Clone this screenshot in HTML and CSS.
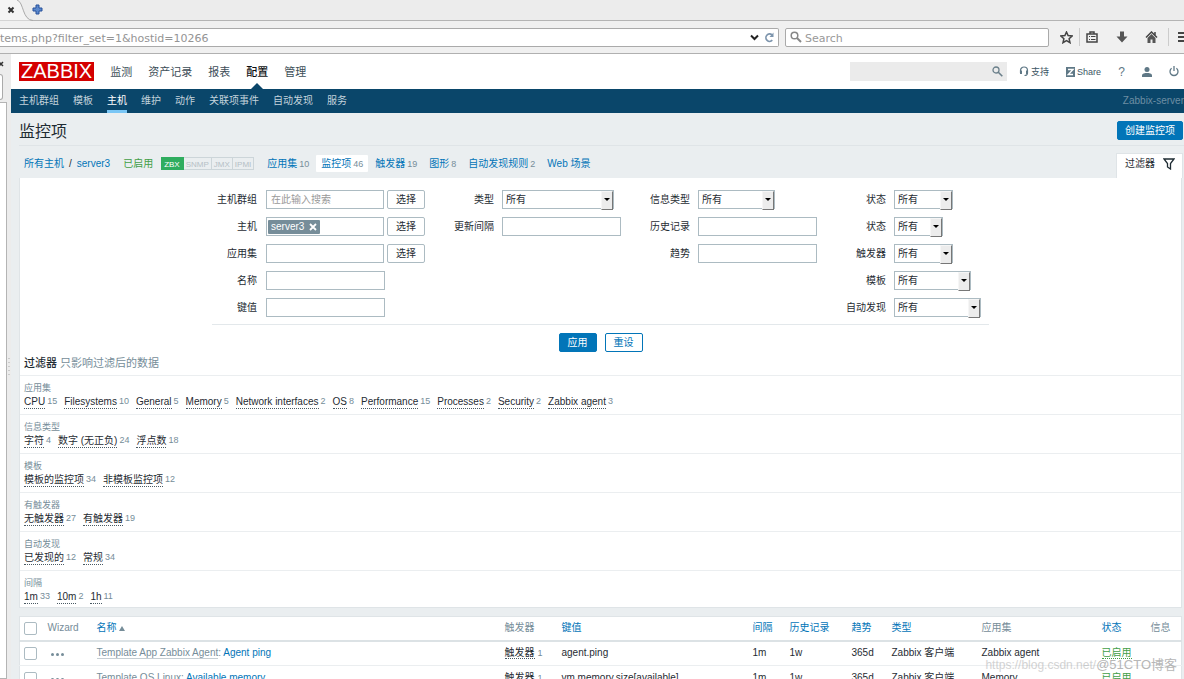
FILE: index.html
```html
<!DOCTYPE html>
<html lang="zh-CN">
<head>
<meta charset="utf-8">
<title>监控项</title>
<link rel="stylesheet" href="styles.css">
</head>
<body>
<div class="tabstrip">
  <svg class="tab-shape" viewBox="0 0 34 21" aria-hidden="true"><path d="M0 0H17C24 2 22 20 32 20.500H0Z" fill="#f4f4f4"/><path d="M17 0C24 2 22 20 33 20.500" fill="none" stroke="#aaa"/><path d="M8.500 7.500l5 5M13.500 7.500l-5 5" stroke="#333" stroke-width="2"/></svg>
  <button class="plain" aria-label="New tab"><svg width="12" height="12" viewBox="0 0 12 12"><path d="M4 1h3v3h3v3H7v3H4V7H1V4h3z" fill="#5b88cc" stroke="#27509b"/></svg></button>
</div>
<div class="toolbar">
  <div class="urlbar">
    <input class="url" aria-label="Address" value="tems.php?filter_set=1&amp;hostid=10266">
    <svg width="9" height="7" viewBox="0 0 9 7"><path d="M1 1.500l3.500 3.500L8 1.500" fill="none" stroke="#222" stroke-width="2"/></svg>
    <svg width="11" height="11" viewBox="0 0 11 11"><path d="M8.300 8.200A3.700 3.700 0 1 1 8 2.800" fill="none" stroke="#7d95ad" stroke-width="1.700"/><path d="M9.500 0.500v4.500H5.500z" fill="#7d95ad"/></svg>
  </div>
  <div class="searchbar">
    <svg width="12" height="12" viewBox="0 0 12 12"><circle cx="4.500" cy="4.500" r="3.300" fill="none" stroke="#888" stroke-width="1.500"/><path d="M7 7l4 4" stroke="#888" stroke-width="2"/></svg>
    <input placeholder="Search" aria-label="Search">
  </div>
  <div class="tools">
    <svg class="star" width="13" height="13" viewBox="0 0 13 13"><path d="M6.500 1l1.600 3.600 4 .4-3 2.700.9 4-3.500-2-3.500 2 .9-4-3-2.700 4-.4z" fill="none" stroke="#444" stroke-width="1.500"/></svg>
    <i class="sep"></i>
    <svg class="clip" width="12" height="12" viewBox="0 0 12 12"><path d="M4 3V1h4v2M1 3h10v8H1z" fill="none" stroke="#444" stroke-width="1.500"/><path d="M3 5.500h1M5 5.500h4.500M3 8.500h1M5 8.500h4.500" stroke="#444"/></svg>
    <svg class="down" width="12" height="12" viewBox="0 0 12 12"><path d="M4 0.500h4v5h3.500L6 11.500.5 5.500H4z" fill="#555"/></svg>
    <svg class="home" width="13" height="12" viewBox="0 0 13 12"><path d="M1 6.500L6.500 1 12 6.500M10 1v3" fill="none" stroke="#444" stroke-width="1.500"/><path d="M2.500 7L6.500 3l4 4v5H7.500V8.500h-2V12h-3z" fill="#555"/></svg>
    <i class="sep"></i>
    <svg class="menu" width="6" height="12" viewBox="0 0 6 12"><path d="M0 2h6M0 6h6M0 10h6" stroke="#444" stroke-width="2"/></svg>
  </div>
</div>
<div class="workspace">
  <aside class="sidebar">
    <svg width="5" height="20" viewBox="0 0 5 20"><path d="M-1 8l4 4M3 8l-4 4" stroke="#333" stroke-width="1.500"/></svg>
    <div class="side-field"></div>
    <div class="side-list"></div>
    <svg class="grip" width="2" height="20" viewBox="0 0 2 20"><path d="M1 0v20" stroke="#aaa" stroke-dasharray="1 3"/></svg>
  </aside>
  <div class="page">
    <header class="top">
      <a class="logo" href="#">ZABBIX</a>
      <nav class="mainnav"><a href="#">监测</a><a href="#">资产记录</a><a href="#">报表</a><a href="#" class="on">配置</a><a href="#">管理</a></nav>
      <div class="topsearch"><input aria-label="搜索"><svg width="11" height="11" viewBox="0 0 11 11"><circle cx="4" cy="4" r="3" fill="none" stroke="#6a7f8a" stroke-width="1.300"/><path d="M6.300 6.300l4 4" stroke="#6a7f8a" stroke-width="1.600"/></svg></div>
      <div class="toplinks">
        <a href="#"><svg width="10" height="11" viewBox="0 0 10 11"><path d="M1.500 7V4.500a3.500 3.500 0 0 1 7 0V7c0 2-1 2.500-3 2.500" fill="none" stroke="#5f7886" stroke-width="1.200"/><path d="M1 4.500h2v3.500H1zM7 4.500h2v3.500H7z" fill="#5f7886"/></svg><span>支持</span></a>
        <a href="#"><svg width="9" height="10" viewBox="0 0 9 10"><path d="M0 0h9v10H0z" fill="#5f7886"/><path d="M2 2.500h5L2.300 7.500H7" fill="none" stroke="#fff" stroke-width="1.400"/></svg><span>Share</span></a>
        <a href="#" class="help">?</a>
        <a href="#" aria-label="用户"><svg width="10" height="10" viewBox="0 0 10 10"><circle cx="5" cy="2.600" r="2.500" fill="#5f7886"/><path d="M0 10V8.500C0 6.500 3 6 5 6s5 .5 5 2.500V10z" fill="#5f7886"/></svg></a>
        <a href="#" aria-label="退出"><svg width="10" height="11" viewBox="0 0 10 11"><path d="M2.600 2.300a4 4 0 1 0 4.800 0M5 0v5" fill="none" stroke="#5f7886" stroke-width="1.300"/></svg></a>
      </div>
    </header>
    <nav class="subnav"><a href="#">主机群组</a><a href="#">模板</a><a href="#" class="on">主机</a><a href="#">维护</a><a href="#">动作</a><a href="#">关联项事件</a><a href="#">自动发现</a><a href="#">服务</a><span class="server">Zabbix-server</span></nav>
    <div class="titlebar"><h1>监控项</h1><button class="btn primary create">创建监控项</button></div>
    <div class="crumbs">
      <a href="#">所有主机</a><span class="slash">/</span><a href="#">server3</a><a href="#" class="green enabled">已启用</a>
      <span class="badges"><span class="zbx">ZBX</span><span>SNMP</span><span>JMX</span><span>IPMI</span></span>
      <div class="tabs"><span><a href="#">应用集</a><em>10</em></span><span class="current"><a href="#">监控项</a><em>46</em></span><span><a href="#">触发器</a><em>19</em></span><span><a href="#">图形</a><em>8</em></span><span><a href="#">自动发现规则</a><em>2</em></span><span><a href="#">Web 场景</a></span></div>
      <button class="filter-tab">过滤器 <svg width="12" height="12" viewBox="0 0 12 12"><path d="M1 1h10L7.500 5.500V11L4.500 9V5.500z" fill="none" stroke="#1f2c33" stroke-width="1.300"/></svg></button>
    </div>
    <section class="filter">
      <form class="form">
        <div class="col c1">
          <label for="grp">主机群组</label><span class="pair"><input id="grp" class="box" placeholder="在此输入搜索"><button type="button" class="btn">选择</button></span>
          <label for="host">主机</label><span class="pair"><span class="box multi"><span class="tag">server3 <svg width="8" height="8" viewBox="0 0 8 8"><path d="M1 1l6 6M7 1L1 7" stroke="#fff" stroke-width="1.800"/></svg></span><input id="host"></span><button type="button" class="btn">选择</button></span>
          <label for="app">应用集</label><span class="pair"><input id="app" class="box"><button type="button" class="btn">选择</button></span>
          <label for="name">名称</label><input id="name" class="box">
          <label for="key">键值</label><input id="key" class="box">
        </div>
        <div class="col c2">
          <label for="type">类型</label><span class="sel w112"><select id="type"><option>所有</option></select></span>
          <label for="upd">更新间隔</label><input id="upd" class="box">
        </div>
        <div class="col c3">
          <label for="vtype">信息类型</label><span class="sel w77"><select id="vtype"><option>所有</option></select></span>
          <label for="hist">历史记录</label><input id="hist" class="box">
          <label for="trend">趋势</label><input id="trend" class="box">
        </div>
        <div class="col c4">
          <label for="s1">状态</label><span class="sel w58"><select id="s1"><option>所有</option></select></span>
          <label for="s2">状态</label><span class="sel w49"><select id="s2"><option>所有</option></select></span>
          <label for="s3">触发器</label><span class="sel w58"><select id="s3"><option>所有</option></select></span>
          <label for="s4">模板</label><span class="sel w77"><select id="s4"><option>所有</option></select></span>
          <label for="s5">自动发现</label><span class="sel w87"><select id="s5"><option>所有</option></select></span>
        </div>
      </form>
      <div class="actions"><button class="btn primary">应用</button><button class="btn outline">重设</button></div>
      <h2>过滤器 <span>只影响过滤后的数据</span></h2>
      <div class="sub"><h3>应用集</h3><div class="opts"><span><a href="#">CPU</a><em>15</em></span><span><a href="#">Filesystems</a><em>10</em></span><span><a href="#">General</a><em>5</em></span><span><a href="#">Memory</a><em>5</em></span><span><a href="#">Network interfaces</a><em>2</em></span><span><a href="#">OS</a><em>8</em></span><span><a href="#">Performance</a><em>15</em></span><span><a href="#">Processes</a><em>2</em></span><span><a href="#">Security</a><em>2</em></span><span><a href="#">Zabbix agent</a><em>3</em></span></div></div>
      <div class="sub"><h3>信息类型</h3><div class="opts"><span><a href="#">字符</a><em>4</em></span><span><a href="#">数字 (无正负)</a><em>24</em></span><span><a href="#">浮点数</a><em>18</em></span></div></div>
      <div class="sub"><h3>模板</h3><div class="opts"><span><a href="#">模板的监控项</a><em>34</em></span><span><a href="#">非模板监控项</a><em>12</em></span></div></div>
      <div class="sub"><h3>有触发器</h3><div class="opts"><span><a href="#">无触发器</a><em>27</em></span><span><a href="#">有触发器</a><em>19</em></span></div></div>
      <div class="sub"><h3>自动发现</h3><div class="opts"><span><a href="#">已发现的</a><em>12</em></span><span><a href="#">常规</a><em>34</em></span></div></div>
      <div class="sub"><h3>间隔</h3><div class="opts"><span><a href="#">1m</a><em>33</em></span><span><a href="#">10m</a><em>2</em></span><span><a href="#">1h</a><em>11</em></span></div></div>
    </section>
    <table class="items">
      <colgroup><col class="k1"><col class="k2"><col><col class="k4"><col class="k5"><col class="k6"><col class="k7"><col class="k8"><col class="k9"><col class="k10"><col class="k11"><col class="k12"></colgroup>
      <thead><tr><th><input type="checkbox" aria-label="全选"></th><th>Wizard</th><th><a href="#">名称 <i class="up"></i></a></th><th>触发器</th><th><a href="#">键值</a></th><th><a href="#">间隔</a></th><th><a href="#">历史记录</a></th><th><a href="#">趋势</a></th><th><a href="#">类型</a></th><th>应用集</th><th><a href="#">状态</a></th><th>信息</th></tr></thead>
      <tbody>
        <tr><td><input type="checkbox" aria-label="Agent ping"></td><td><button class="plain dots" aria-label="菜单"><i></i><i></i><i></i></button></td><td><a href="#" class="tpl">Template App Zabbix Agent</a><span class="muted">:</span> <a href="#">Agent ping</a></td><td><a href="#" class="trig">触发器</a><em>1</em></td><td>agent.ping</td><td>1m</td><td>1w</td><td>365d</td><td>Zabbix 客户端</td><td>Zabbix agent</td><td><a href="#" class="green status">已启用</a></td><td></td></tr>
        <tr><td><input type="checkbox" aria-label="Available memory"></td><td><button class="plain dots" aria-label="菜单"><i></i><i></i><i></i></button></td><td><a href="#" class="tpl">Template OS Linux</a><span class="muted">:</span> <a href="#">Available memory</a></td><td><a href="#" class="trig">触发器</a><em>1</em></td><td>vm.memory.size[available]</td><td>1m</td><td>1w</td><td>365d</td><td>Zabbix 客户端</td><td>Memory</td><td><a href="#" class="green status">已启用</a></td><td></td></tr>
      </tbody>
    </table>
  </div>
</div>
<div class="watermark"><span class="wm-url">https://blog.csdn.net/</span><span class="wm-name">@51CTO博客</span></div>
</body>
</html>
```
FILE: styles.css
```css
* { box-sizing: border-box; }
body {
  margin: 0;
  height: 100vh;
  overflow: hidden;
  position: relative;
  display: flex;
  flex-direction: column;
  background: #eaeef0;
  color: #1f2c33;
  font: 10px/14px "Liberation Sans", "Noto Sans CJK SC", sans-serif;
}
a { color: #0275b8; text-decoration: none; }
em { font-style: normal; font-size: 9px; color: #768d99; }
input, button, select { font: inherit; color: inherit; margin: 0; padding: 0; }
svg { flex: none; display: block; }
h1, h2, h3 { margin: 0; font-weight: normal; }
.plain { border: 0; background: none; }

.tabstrip { flex: none; height: 21px; display: flex; align-items: center; background: #ececec; border-bottom: 1px solid #b4b4b4; }
.tab-shape { width: 34px; height: 21px; margin-right: -2px; }
.toolbar { flex: none; height: 33px; display: flex; align-items: center; gap: 6px; background: #f0f0f0; border-bottom: 1px solid #b0b0b0; }
.urlbar, .searchbar { height: 19px; display: flex; align-items: center; background: #fff; border: 1px solid #aaa; border-radius: 2px; font: 11px/14px "DejaVu Sans", sans-serif; }
.urlbar { flex: 1; gap: 5px; padding-right: 3px; border-left: 0; border-radius: 0 2px 2px 0; }
.urlbar input, .searchbar input { flex: 1; min-width: 0; height: 17px; padding-top: 2px; border: 0; outline: 0; background: none; color: #949494; }
.searchbar { width: 264px; gap: 3px; padding-left: 4px; }
.searchbar input::placeholder { color: #999; }
.tools { width: 129px; display: flex; align-items: center; padding-left: 5px; overflow: hidden; }
.sep { flex: none; width: 1px; height: 18px; background: #ccc; }
.star { margin-right: 6px; }
.clip { margin: 0 18px 0 6px; }
.home { margin: 0 10px 0 17px; }
.menu { margin-left: 9px; }

.workspace { flex: 1; min-height: 0; display: flex; overflow: hidden; }
.sidebar { width: 11px; flex: none; position: relative; display: flex; flex-direction: column; background: #ececec; }
.side-field { width: 3px; height: 26px; background: #fff; border: 1px solid #aaa; border-left: 0; border-radius: 0 3px 3px 0; }
.side-list { width: 7px; flex: 1; margin-top: 2px; background: #fff; border: 1px solid #b4b4b4; border-left: 0; }
.grip { position: absolute; left: 8px; top: 304px; }
.page { flex: 1; min-width: 0; }

.top { height: 35px; display: flex; align-items: center; padding: 0 5px 0 8px; background: #fff; }
.logo { padding: 0 2px; background: #d40000; color: #fff; font-size: 20px; line-height: 19px; height: 19px; }
.mainnav { display: flex; gap: 16px; margin-left: 16px; font-size: 11px; align-self: stretch; line-height: 36px; }
.mainnav a { color: #3c4d57; position: relative; }
.mainnav .on { color: #0e1012; font-weight: 500; }
.mainnav .on::after { content: ""; position: absolute; bottom: 0; left: 5px; border: 6px solid transparent; border-top: 0; border-bottom-color: #0a466a; }
.topsearch { margin-left: auto; width: 157px; height: 19px; display: flex; align-items: center; padding-right: 4px; background: #ebebeb; }
.topsearch input { flex: 1; min-width: 0; border: 0; background: none; }
.toplinks { display: flex; align-items: center; justify-content: space-between; width: 160px; margin-left: 12px; font-size: 9px; }
.toplinks a { display: flex; align-items: center; gap: 2px; color: #3c5563; }
.toplinks .help { font-size: 12px; color: #5f7886; }

.subnav { height: 24px; display: flex; gap: 14px; background: #0a466a; padding-left: 8px; line-height: 24px; }
.subnav a { color: #c3d3dc; }
.subnav .on { color: #fff; border-bottom: 3px solid #7ac6f5; }
.server { margin-left: auto; color: #6d8ea3; }

.titlebar { height: 33px; display: flex; align-items: center; justify-content: space-between; margin-left: 8px; padding: 2px 1px 0 0; border-bottom: 1px solid #dfe4e7; }
h1 { font-size: 16px; line-height: 24px; padding-top: 4px; }
.btn { height: 19px; padding: 0 8px; border: 1px solid #acbbc2; border-radius: 2px; background: #fff; line-height: 17px; white-space: nowrap; }
.primary { background: #0275b8; border-color: #0275b8; color: #fff; }
.outline { border-color: #0275b8; color: #0275b8; }
.create { padding: 0 7px; }

.crumbs { height: 32px; display: flex; align-items: center; padding: 3px 1px 0 13px; white-space: nowrap; }
.crumbs .slash { margin: 0 5px; }
.green { color: #429e47; }
.enabled { margin: 0 8px 0 13px; }
.badges { display: flex; height: 13px; margin-right: 8px; font-size: 8px; line-height: 13px; }
.badges span { padding: 0 2px; border: 1px solid #ccd5d9; border-left: 0; color: #b5c0c6; }
.badges .zbx { padding: 0 3px; background: #2fad5f; border-color: #2fad5f; color: #fff; }
.tabs { display: flex; gap: 2px; }
.tabs > span { display: flex; align-items: center; gap: 2px; height: 17px; padding: 0 5px; }
.tabs .current { background: #fff; border-radius: 1px; }
.filter-tab { margin-left: auto; margin-top: 4px; align-self: stretch; display: flex; align-items: center; gap: 8px; padding: 0 7px 4px 8px; border: 1px solid #dfe4e7; border-bottom: 0; background: #fff; }

.filter { margin: 0 2px 0 8px; background: #fff; border: 1px solid #dfe4e7; border-top: 0; }
.form { display: flex; width: 777px; margin: 0 auto; padding: 12px 0 7px; border-bottom: 1px solid #e3e8eb; }
.col { display: grid; grid-template-columns: 45px auto; grid-auto-rows: 19px; row-gap: 8px; column-gap: 9px; align-content: start; justify-content: start; align-items: center; }
.col label { text-align: right; white-space: nowrap; }
.c1 { width: 237px; }
.c2, .c3 { width: 196px; }
.c2, .c3, .c4 { column-gap: 8px; }
.pair { display: flex; gap: 3px; }
.pair .btn { padding: 0 8px; }
.box { width: 119px; height: 19px; padding: 0 4px; border: 1px solid #acbbc2; background: #fff; outline: 0; }
.pair .box { width: 118px; }
.box::placeholder { color: #999; }
.multi { display: flex; align-items: center; padding: 1px; }
.pair .multi { padding: 1px; }
.multi input { flex: 1; min-width: 0; width: 0; border: 0; outline: 0; }
.tag { display: flex; align-items: center; gap: 5px; height: 14px; padding: 0 3px; background: #768d99; color: #fff; border-radius: 1px; }
.sel { position: relative; display: block; height: 19px; border: 1px solid #acbbc2; }
.sel select { width: 100%; height: 17px; display: block; appearance: none; border: 0; border-radius: 0; background: #fff; padding: 0 3px; outline: 0; }
.sel::before { content: ""; position: absolute; right: 0; top: 0; width: 10px; height: 17px; background: #ececec; border: 1px solid #f6f6f6; border-right-color: #777; border-bottom-color: #777; pointer-events: none; }
.sel::after { content: ""; position: absolute; right: 3px; top: 7px; border: 3px solid transparent; border-top-color: #000; border-bottom: 0; pointer-events: none; }
.w112 { width: 112px; }
.w77 { width: 77px; }
.w58 { width: 59px; }
.w49 { width: 49px; }
.w87 { width: 87px; }
.actions { display: flex; justify-content: center; gap: 8px; padding-top: 8px; }
h2 { padding: 3px 4px 4px; font-size: 11px; line-height: 16px; font-weight: 500; }
h2 span { color: #768d99; font-weight: normal; }
.sub { height: 39px; padding: 6px 4px 0; border-top: 1px solid #ebeef0; }
.sub:last-child { height: 37px; }
h3 { font-size: 9px; line-height: 12px; color: #768d99; }
.opts { display: flex; gap: 7px; line-height: 13px; margin-top: 1px; }
.opts span { display: flex; gap: 2px; }
.opts a { color: #1f2c33; border-bottom: 1px dotted #4a5a63; height: 14px; }

.items { width: calc(100% - 10px); margin: 8px 2px 0 8px; table-layout: fixed; border-collapse: collapse; background: #fff; border: 1px solid #dfe4e7; }
.items th, .items td { height: 25px; padding: 0 0 0 4px; text-align: left; font-weight: normal; white-space: nowrap; border-bottom: 1px solid #ebeef0; }
.items th { height: 24px; color: #768d99; border-bottom: 2px solid #dce2e5; }
.k1 { width: 24px; }
.k2 { width: 49px; }
.k4 { width: 57px; }
.k5 { width: 191px; }
.k6 { width: 37px; }
.k7 { width: 62px; }
.k8 { width: 40px; }
.k9 { width: 90px; }
.k10 { width: 120px; }
.k11 { width: 49px; }
.k12 { width: 35px; }
.items input { appearance: none; display: block; width: 13px; height: 13px; border: 1px solid #acbbc2; border-radius: 2px; background: #fff; }
.up { display: inline-block; border: 3px solid transparent; border-top: 0; border-bottom: 5px solid #768d99; }
.dots { display: flex; gap: 2px; padding: 2px 3px 0; }
.dots i { width: 3px; height: 3px; border-radius: 50%; background: #768d99; }
.muted, .items .tpl { color: #768d99; }
.items .tpl { border-bottom: 1px solid #c5ced3; }
.trig { color: #1f2c33; border-bottom: 1px dotted #4a5a63; margin-right: 3px; }
.status { border-bottom: 1px dotted #429e47; }

.watermark { position: absolute; right: 7px; bottom: 5px; display: flex; align-items: center; line-height: 18px; color: #999; opacity: .7; pointer-events: none; }
.wm-url { font-size: 12px; opacity: .6; }
.wm-name { font-size: 13px; }
```
